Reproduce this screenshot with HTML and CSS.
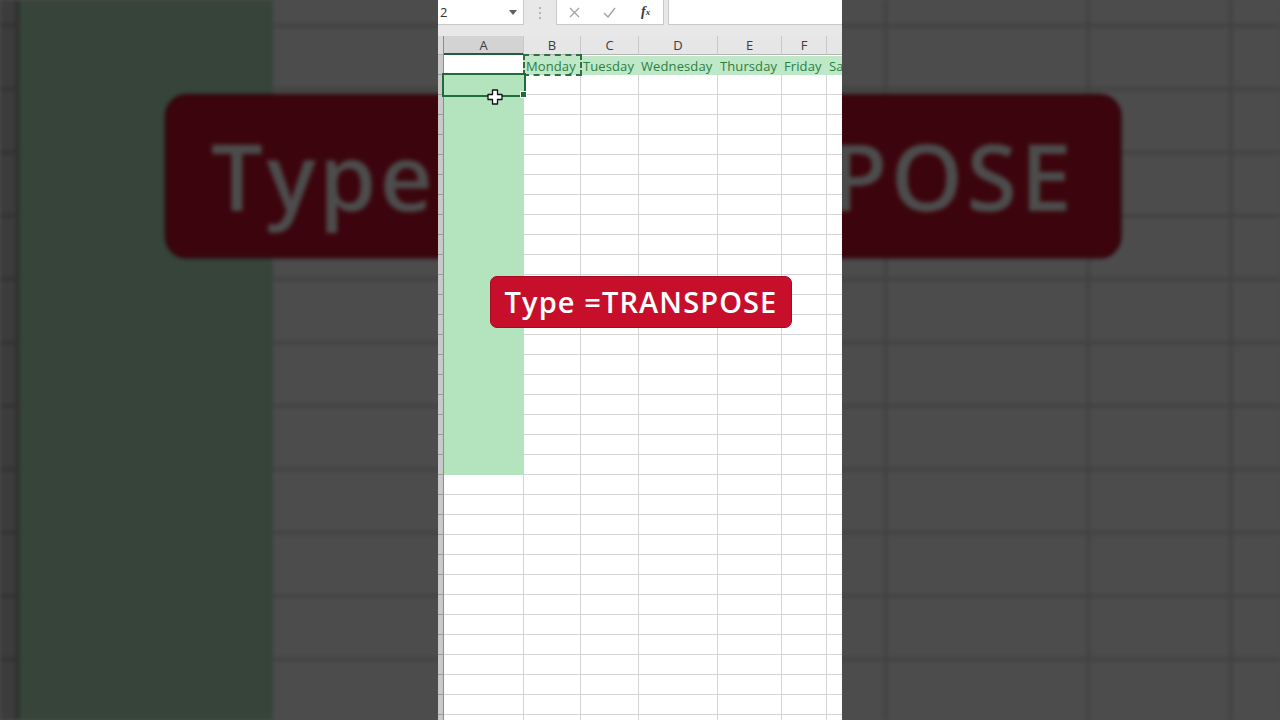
FILE: index.html
```html
<!DOCTYPE html>
<html lang="en">
<head>
  <meta charset="UTF-8" />
  <meta name="viewport" content="width=device-width, initial-scale=1.0"/>
  <title>Type =TRANSPOSE</title>
  <link rel="stylesheet" href="styles.css">
</head>
<body>
  <div class="backdrop" id="backdrop" aria-hidden="true"></div>

  <div class="sheet" id="sheet">
    <div class="formula-bar">
      <div class="name-box">
        <span>2</span>
        <svg class="name-arrow" width="8" height="5" viewBox="0 0 8 5"><path d="M0 0h8L4 5z" fill="#5f5f5f"/></svg>
      </div>
      <div class="bar-dots">
        <svg width="4" height="14" viewBox="0 0 4 14"><circle cx="2" cy="2" r="1.1" fill="#a8a8a8"/><circle cx="2" cy="7" r="1.1" fill="#a8a8a8"/><circle cx="2" cy="12" r="1.1" fill="#a8a8a8"/></svg>
      </div>
      <div class="bar-buttons">
        <span class="bar-btn">
          <svg width="11" height="11" viewBox="0 0 11 11"><path d="M1 1l9 9M10 1l-9 9" stroke="#a3a3a3" stroke-width="1.3" fill="none"/></svg>
        </span>
        <span class="bar-btn">
          <svg width="13" height="11" viewBox="0 0 13 11"><path d="M1 6l4 4 7-9" stroke="#a3a3a3" stroke-width="1.4" fill="none"/></svg>
        </span>
        <span class="bar-btn fx"><i>f</i><sub>x</sub></span>
      </div>
      <div class="formula-input"></div>
    </div>

    <div class="grid" id="grid">
      <div class="corner"></div>
      <div class="col-head active">A</div>
      <div class="col-head">B</div>
      <div class="col-head">C</div>
      <div class="col-head">D</div>
      <div class="col-head">E</div>
      <div class="col-head">F</div>
      <div class="col-head"></div>
    </div>

    <div class="banner">Type =TRANSPOSE</div>
  </div>

  <script>
    const grid = document.getElementById('grid');
    const days = ['Monday', 'Tuesday', 'Wednesday', 'Thursday', 'Friday', 'Sa'];
    const numRows = 34;

    for (let r = 1; r <= numRows; r++) {
      const head = document.createElement('div');
      head.className = 'row-head';
      grid.appendChild(head);

      for (let c = 0; c < 7; c++) {
        const cell = document.createElement('div');
        cell.className = 'cell';

        if (r === 1 && c > 0) {
          cell.classList.add('day');
          cell.textContent = days[c - 1];
          if (c === 1) cell.classList.add('copied');
        }

        // A2:A21 is the picked range
        if (c === 0 && r >= 2 && r <= 21) cell.classList.add('picked');

        if (c === 0 && r === 2) {
          cell.classList.add('active');
          cell.innerHTML = `
            <svg class="cursor" width="16" height="16" viewBox="0 0 16 16">
              <path d="M5.5 1h5v4.5H15v5h-4.5V15h-5v-4.5H1v-5h4.5z" fill="#fff" stroke="#111" stroke-width="1.3" stroke-linejoin="round"/>
            </svg>`;
        }

        grid.appendChild(cell);
      }
    }

    // blurred, zoomed copy of the frame behind it
    const copy = document.getElementById('sheet').cloneNode(true);
    copy.removeAttribute('id');
    copy.querySelectorAll('[id]').forEach(el => el.removeAttribute('id'));
    copy.classList.add('sheet-copy');
    document.getElementById('backdrop').appendChild(copy);
  </script>
</body>
</html>
```

FILE: styles.css
```css
body {
  margin: 0;
  padding: 0;
  height: 100vh;
  display: flex;
  justify-content: center;
  background-color: #4b4b4b;
  overflow: hidden;
  font-family: 'Open Sans', 'Liberation Sans', sans-serif;
}

.backdrop {
  position: fixed;
  inset: 0;
  overflow: hidden;
  filter: brightness(0.3) blur(2px);
}

.sheet {
  position: relative;
  width: 404px;
  height: 720px;
  overflow: hidden;
  background-color: #fff;
  z-index: 1;
}

.sheet-copy {
  position: absolute;
  left: 438px;
  top: 0;
  transform: scale(3.168);
  transform-origin: 202px 360px;
}

/* formula bar */

.formula-bar {
  display: flex;
  height: 36px;
  background-color: #e8e8e8;
  box-sizing: border-box;
}

.name-box {
  width: 86px;
  height: 25px;
  box-sizing: border-box;
  background-color: #fff;
  border-right: 1px solid #c9c9c9;
  border-bottom: 1px solid #c9c9c9;
  display: flex;
  align-items: center;
  justify-content: space-between;
  padding: 0 6px 0 2px;
  font-size: 13px;
  color: #333;
}

.bar-dots {
  width: 32px;
  height: 25px;
  display: flex;
  align-items: center;
  justify-content: center;
}

.bar-buttons {
  width: 108px;
  height: 25px;
  box-sizing: border-box;
  display: flex;
  background-color: #fff;
  border: 1px solid #c9c9c9;
  border-top: none;
}

.bar-btn {
  flex: 1;
  display: flex;
  align-items: center;
  justify-content: center;
}

.fx {
  font-family: 'Liberation Serif', serif;
  font-size: 14px;
  color: #3a3a3a;
  padding-left: 2px;
}

.fx i {
  font-weight: bold;
}

.fx sub {
  font-size: 9px;
  font-style: italic;
  font-weight: bold;
  vertical-align: -1px;
}

.formula-input {
  flex: 1;
  height: 25px;
  margin-left: 4px;
  box-sizing: border-box;
  background-color: #fff;
  border-left: 1px solid #c9c9c9;
  border-bottom: 1px solid #c9c9c9;
}

/* grid */

.grid {
  display: grid;
  grid-template-columns: 6px 80px 57px 58px 79px 64px 45px 1fr;
  grid-template-rows: 19px;
  grid-auto-rows: 20px;
}

.corner,
.row-head {
  background-color: #c9c9c9;
  border-right: 1px solid #8c8c8c;
  border-bottom: 1px solid #9d9d9d;
}

.corner {
  background-color: #d8d8d8;
  border-bottom-color: #b0b0b0;
}

.col-head {
  background-color: #e6e6e6;
  border-right: 1px solid #c9c9c9;
  border-bottom: 1px solid #b4b4b4;
  font-size: 13px;
  line-height: 19px;
  color: #3c3c3c;
  text-align: center;
}

.col-head.active {
  background-color: #d3d3d3;
  border-bottom: 2px solid #1f5f3a;
  line-height: 18px;
}

.cell {
  position: relative;
  border-right: 1px solid #d5d5d5;
  border-bottom: 1px solid #d5d5d5;
  font-size: 13px;
  line-height: 19px;
  white-space: nowrap;
  overflow: visible;
}

.cell.day {
  background-color: #bfe8c8;
  border-color: #bfe8c8;
  color: #2b7e3f;
  padding-left: 2px;
  margin-top: 1px;
  line-height: 21px;
  letter-spacing: 0.1px;
}

.cell.copied {
  z-index: 2;
  outline: 2px dashed #2f6f41;
  outline-offset: -1px;
  margin-top: 0;
  line-height: 22px;
}

.cell.picked {
  background-color: #b3e4be;
  border-color: #b3e4be;
}

.cell.active {
  z-index: 3;
  outline: 2px solid #1f6b3c;
  outline-offset: 0;
}

.cell.active::after {
  content: '';
  position: absolute;
  right: -4px;
  bottom: -4px;
  width: 5px;
  height: 5px;
  background-color: #1f6b3c;
  border: 1px solid #fff;
}

.cursor {
  position: absolute;
  left: 43px;
  top: 14px;
}

/* caption */

.banner {
  position: absolute;
  left: 52px;
  top: 276px;
  width: 302px;
  height: 52px;
  box-sizing: border-box;
  background-color: #c70f2c;
  border: 1px solid #a80a22;
  border-radius: 7px;
  color: #fff;
  font-family: 'Open Sans', sans-serif;
  font-weight: 600;
  font-size: 29px;
  letter-spacing: 1.1px;
  line-height: 50px;
  text-align: center;
  white-space: nowrap;
  z-index: 5;
}
```
